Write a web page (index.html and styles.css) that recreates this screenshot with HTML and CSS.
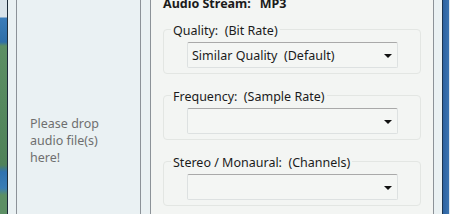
FILE: index.html
```html
<!DOCTYPE html>
<html lang="en">
<head>
    <meta charset="UTF-8">
    <title>Audio Settings</title>
    <link rel="stylesheet" href="styles.css">
</head>
<body>

    <div class="desktop"></div>
    <div class="frame-left"></div>

    <div class="window">
        <div class="drop-area">
            <p class="drop-text">Please drop<br>audio file(s)<br>here!</p>
        </div>

        <div class="panel">
            <div class="stream-title">Audio Stream:<span class="stream-type">MP3</span></div>

            <fieldset class="group">
                <legend class="group-label">Quality:  (Bit Rate)</legend>
                <div class="combo">
                    <span class="combo-text">Similar Quality  (Default)</span>
                    <span class="combo-arrow"></span>
                </div>
            </fieldset>

            <fieldset class="group">
                <legend class="group-label">Frequency:  (Sample Rate)</legend>
                <div class="combo">
                    <span class="combo-text"></span>
                    <span class="combo-arrow"></span>
                </div>
            </fieldset>

            <fieldset class="group">
                <legend class="group-label">Stereo / Monaural:  (Channels)</legend>
                <div class="combo">
                    <span class="combo-text"></span>
                    <span class="combo-arrow"></span>
                </div>
            </fieldset>
        </div>
    </div>

    <div class="frame-right"></div>

</body>
</html>
```

FILE: styles.css
```css
* {
    margin: 0;
    padding: 0;
    box-sizing: border-box;
}

body {
    display: flex;
    width: 450px;
    height: 214px;
    overflow: hidden;
    font-family: "Noto Sans", "Open Sans", sans-serif;
    font-size: 12.5px;
    color: #1b1b1b;
    background: #eaf1f3;
}

.desktop {
    width: 7px;
    background: linear-gradient(to bottom, #d9e3ea 0, #d9e3ea 17px, #3b7cb9 18px, #2f6fa8 42px, #5c8f64 46px, #4f8259 165px, #2f72b0 172px, #3a7db5 188px, #5c8f64 195px);
}

.frame-left {
    width: 1px;
    background: #1c2a38;
}

.window {
    display: flex;
    padding-left: 8px;
    gap: 9px;
    background: #eaf1f3;
}

.drop-area {
    width: 125px;
    border-left: 1px solid #8c9298;
    border-right: 1px solid #8c9298;
    background: #eaf1f3;
    padding: 115px 0 0 13px;
}

.drop-text {
    color: #6f6f6f;
    line-height: 17px;
}

.panel {
    width: 284px;
    border-left: 1px solid #8c9298;
    border-right: 1px solid #8c9298;
    background: #f3f5f3;
    padding: 0 12px;
}

.stream-title {
    font-weight: bold;
    line-height: 16px;
    margin-top: -4px;
    margin-bottom: 7px;
}

.stream-type {
    margin-left: 9px;
}

.group {
    border: 1px solid #e3e6e3;
    border-radius: 4px;
    padding: 0 22px 5px 7px;
    margin-bottom: 11px;
}

.group-label {
    white-space: pre;
    line-height: 16px;
    padding: 4px 2px 0 2px;
}

.combo {
    display: flex;
    align-items: center;
    justify-content: space-between;
    height: 26px;
    margin: 3px 0 0 16px;
    border: 1px solid #dde1e1;
    border-top-color: #a9a9a9;
    border-radius: 2px;
    background: #f4f6f4;
    padding: 0 5px 0 4px;
}

.combo-text {
    white-space: pre;
}

.combo-arrow {
    width: 0;
    height: 0;
    border-left: 4px solid transparent;
    border-right: 4px solid transparent;
    border-top: 4px solid #111;
    margin-top: 2px;
}

.frame-right {
    width: 16px;
    background: linear-gradient(to right, #eaf1f3 0, #eaf1f3 8px, #1c3550 8px, #1c3550 9px, #2c62a0 9px, #3b73b0 15px, #dfe7ee 15px);
}
```
